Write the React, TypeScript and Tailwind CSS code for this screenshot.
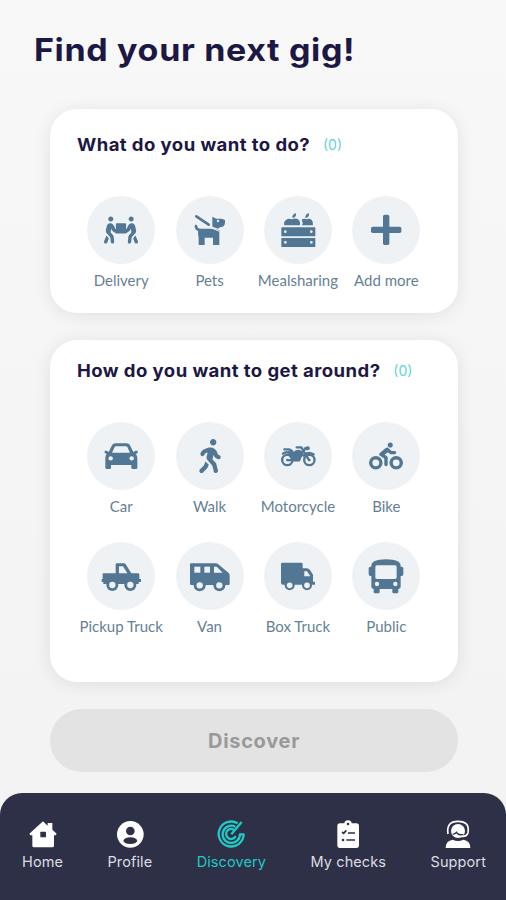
import type { ReactNode } from "react";
import { FaBiking, FaPeopleCarry, FaWalking } from "react-icons/fa";

const BG = "#eff2f4";

type Option = { label: string; icon: ReactNode };
type Tab = { label: string; icon: ReactNode; active?: boolean };

/* All option glyphs share a 204 unit canvas that spans the whole circle. */
function Glyph({ children }: { children: ReactNode }) {
  return (
    <svg viewBox="0 0 204 204" className="h-full w-full" fill="currentColor">
      {children}
    </svg>
  );
}

function Wheel({ x, y }: { x: number; y: number }) {
  return (
    <>
      <circle cx={x} cy={y} r="18" />
      <circle cx={x} cy={y} r="9.5" fill={BG} />
    </>
  );
}

const gigs: Option[] = [
  { label: "Delivery", icon: <FaPeopleCarry className="h-[28px] w-[34px]" /> },
  {
    label: "Pets",
    icon: (
      <Glyph>
        <path d="M61 61 98 86" stroke="currentColor" strokeWidth="8" strokeLinecap="round" />
        <path d="M109 62 121 68H137L147 72V81Q145 94 132 94L126 98 109 92Z" />
        <circle cx="126" cy="75" r="3.5" fill={BG} />
        <path d="M60 90Q60 101 72 102" fill="none" stroke="currentColor" strokeWidth="8" strokeLinecap="round" />
        <path d="M66 98H104L130 102V147H111V125H86V147H68V123Q66 121 66 98Z" />
        <path d="M99 92 130 106" stroke={BG} strokeWidth="3" />
      </Glyph>
    ),
  },
  {
    label: "Mealsharing",
    icon: (
      <Glyph>
        <path d="M61 88Q58 78 66 72 73 66 84 70 95 65 102 70 110 76 108 88ZM114 88Q118 79 113 71 120 66 128 70 137 66 143 72 149 79 147 88Z" />
        <path d="M85 66Q84 54 96 52 98 64 85 66ZM124 66Q123 54 135 52 137 64 124 66Z" />
        <rect x="52" y="94" width="102" height="27" rx="1" />
        <rect x="52" y="126" width="102" height="27" rx="1" />
        <g fill={BG}>
          <circle cx="64" cy="107" r="4" />
          <circle cx="142" cy="107" r="4" />
          <circle cx="64" cy="139" r="4" />
          <circle cx="142" cy="139" r="4" />
        </g>
      </Glyph>
    ),
  },
  {
    label: "Add more",
    icon: (
      <Glyph>
        <rect x="57" y="92" width="91" height="19" rx="5" />
        <rect x="93" y="56" width="19" height="91" rx="5" />
      </Glyph>
    ),
  },
];

const transport: Option[] = [
  {
    label: "Car",
    icon: (
      <Glyph>
        <path d="M65 90 75 70Q78 64 85 64H119Q126 64 129 70L139 90 146 86H152V93L146 96Q151 101 151 108V137Q151 141 147 141H137Q133 141 133 137V129H72V137Q72 141 68 141H59Q55 141 55 137V108Q55 101 59 96L53 93V86H59Z" />
        <path d="M75 92 83 75Q84 73 87 73H117Q120 73 121 75L129 92Z" fill={BG} />
        <circle cx="71" cy="109" r="6.5" fill={BG} />
        <circle cx="134" cy="109" r="6.5" fill={BG} />
      </Glyph>
    ),
  },
  { label: "Walk", icon: <FaWalking className="h-[34px] w-[22px]" /> },
  {
    label: "Motorcycle",
    icon: (
      <Glyph>
        <g fill="none" stroke="currentColor" strokeWidth="7">
          <circle cx="70" cy="114" r="15.5" />
          <circle cx="136" cy="114" r="15.5" />
          <path d="M98 76H112L134 113M61 82H76L85 88M120 84 110 102M57 95Q70 85 86 99M118 101Q130 87 149 97" strokeLinecap="round" />
        </g>
        <circle cx="70" cy="114" r="4" />
        <circle cx="136" cy="114" r="4" />
        <path d="M72 86 90 89Q94 82 106 83L115 88 116 98 108 118H86L76 105Z" />
        <path d="M119 77 130 73Q137 73 138 78 137 85 131 85H122Z" />
        <path d="M70 111H108V118H70Z" />
      </Glyph>
    ),
  },
  { label: "Bike", icon: <FaBiking className="h-[28px] w-[34px]" /> },
  {
    label: "Pickup Truck",
    icon: (
      <Glyph>
        <path d="M47 94H86V67Q86 64 89 64H111Q114 64 116 67L133 94H153Q157 94 157 98V111H162V120H155V126H49V120H44V111H47Z" />
        <path d="M96 73H108L121 94H96Z" fill={BG} />
        <Wheel x={76} y={129} />
        <Wheel x={130} y={129} />
      </Glyph>
    ),
  },
  {
    label: "Van",
    icon: (
      <Glyph>
        <path d="M42 67Q42 64 45 64H120Q124 64 127 67L158 93Q161 96 161 101V125Q161 129 157 129H46Q42 129 42 125Z" />
        <g fill={BG}>
          <rect x="55" y="74" width="18" height="18" />
          <rect x="85" y="74" width="17" height="18" />
          <path d="M114 74H122L140 92H114Z" />
        </g>
        <Wheel x={71} y={130} />
        <Wheel x={130} y={130} />
      </Glyph>
    ),
  },
  {
    label: "Box Truck",
    icon: (
      <Glyph>
        <path d="M51 66Q51 62 55 62H112Q116 62 116 66V79H128Q134 79 138 84L147 98V119H153V128H57Q51 128 51 122Z" />
        <path d="M121 88H129L139 103H121Z" fill={BG} />
        <circle cx="77" cy="130" r="15" />
        <circle cx="77" cy="130" r="8.5" fill={BG} />
        <circle cx="129" cy="130" r="15" />
        <circle cx="129" cy="130" r="8.5" fill={BG} />
      </Glyph>
    ),
  },
  {
    label: "Public",
    icon: (
      <Glyph>
        <path d="M58 72Q58 52 102 52 146 52 146 72V74H149Q154 74 154 79V97Q154 102 149 102H146V135Q146 140 139 141V150Q139 154 135 154H125Q121 154 121 150V141H83V150Q83 154 79 154H69Q65 154 65 150V141Q58 140 58 135V102H55Q50 102 50 97V79Q50 74 55 74H58Z" />
        <rect x="70" y="70" width="64" height="41" rx="5" fill={BG} />
        <circle cx="75" cy="126" r="6.5" fill={BG} />
        <circle cx="130" cy="126" r="6.5" fill={BG} />
      </Glyph>
    ),
  },
];

/* Tab icons are drawn on an 84 unit canvas. */
function TabIcon({ children }: { children: ReactNode }) {
  return (
    <svg viewBox="0 0 84 84" className="h-[28px] w-[28px]" fill="currentColor">
      {children}
    </svg>
  );
}

const NAV = "#2e3048";

const tabs: Tab[] = [
  {
    label: "Home",
    icon: (
      <TabIcon>
        <path d="M42 4 56 17V9H70V29L83 41 80 46H75V77Q75 82 70 82H15Q10 82 10 77V46H4L1 41Z" />
        <rect x="34" y="35" width="17" height="17" rx="2" fill={NAV} />
      </TabIcon>
    ),
  },
  {
    label: "Profile",
    icon: (
      <TabIcon>
        <circle cx="43" cy="43" r="40" />
        <circle cx="43" cy="33" r="13" fill={NAV} />
        <path d="M22 63Q25 52 43 52 61 52 64 63 60 72 43 72 26 72 22 63Z" fill={NAV} />
      </TabIcon>
    ),
  },
  {
    label: "Discovery",
    active: true,
    icon: (
      <TabIcon>
        <g fill="none" stroke="currentColor" strokeWidth="7">
          <path d="M62 10A37.5 37.5 0 1 0 80 43H69A26 26 0 1 1 55 20" strokeLinejoin="round" />
          <path d="M50 29A15 15 0 1 0 56 48" />
          <path d="M43 43 74 6" />
        </g>
      </TabIcon>
    ),
  },
  {
    label: "My checks",
    icon: (
      <TabIcon>
        <path d="M18 10H31Q32 1 42 1 52 1 53 10H67Q75 10 75 18V76Q75 84 67 84H18Q10 84 10 76V18Q10 10 18 10Z" />
        <circle cx="42" cy="12" r="4" fill={NAV} />
        <g fill="none" stroke={NAV} strokeWidth="5">
          <path d="M24 36 29 40 37 31M42 39H63M37 60H63" />
        </g>
        <circle cx="27" cy="60" r="4" fill={NAV} />
      </TabIcon>
    ),
  },
  {
    label: "Support",
    icon: (
      <TabIcon>
        <g fill="none" stroke="currentColor" strokeWidth="5">
          <path d="M12 42Q6 4 42 4 78 4 72 38 69 49 56 49H46" />
        </g>
        <circle cx="42" cy="33" r="21" />
        <path d="M26 42Q33 43 37 37 43 47 58 43" fill="none" stroke={NAV} strokeWidth="4" />
        <path d="M5 84Q5 62 26 59 42 67 58 59 79 62 79 84Z" />
      </TabIcon>
    ),
  },
];

function OptionCard({
  title,
  countClass,
  options,
  className,
}: {
  title: string;
  countClass: string;
  options: Option[];
  className: string;
}) {
  return (
    <section
      className={`rounded-[27px] bg-white px-[27px] shadow-[0_2px_18px_rgba(0,0,0,0.09)] ${className}`}
    >
      <h2 className="flex h-6 items-center whitespace-nowrap">
        <span className="origin-left scale-x-[1.06] text-[17.5px] font-bold tracking-[0.4px] text-[#1c1843]">
          {title}
        </span>
        <span className={`relative -top-px text-[14px] text-[#62d5d6] ${countClass}`}>(0)</span>
      </h2>
      <div className="mt-[39px] mr-[0.5px] grid grid-cols-4 gap-y-[20px]">
        {options.map((o) => (
          <button key={o.label} className="flex h-[99.5px] flex-col items-center">
            <span className="flex h-[68px] w-[68px] shrink-0 items-center justify-center rounded-full bg-[#eff2f4] text-[#527794]">
              {o.icon}
            </span>
            <span className="mt-[6px] font-['Lato'] text-[15px] leading-5 whitespace-nowrap text-[#657f95]">
              {o.label}
            </span>
          </button>
        ))}
      </div>
    </section>
  );
}

export default function App() {
  return (
    <div className="flex h-[900px] w-full flex-col overflow-hidden bg-linear-to-b from-[#f8f8f8] to-[#f2f2f2] font-['Inter',sans-serif]">
      <h1 className="mt-[28px] ml-[34px] h-[44px] origin-left scale-x-[1.08] self-start text-[31.5px] leading-[44px] font-bold tracking-[0.6px] whitespace-nowrap text-[#1c1843]">
        Find your next gig!
      </h1>

      <main className="mt-[37px] flex flex-col pr-[48px] pl-[50px]">
        <OptionCard
          title="What do you want to do?"
          countClass="ml-[26px]"
          options={gigs}
          className="h-[204px] pt-[24px]"
        />
        <OptionCard
          title="How do you want to get around?"
          countClass="ml-[30px]"
          options={transport}
          className="mt-[27px] h-[342px] pt-[19px]"
        />
        <button className="mt-[27px] h-[63px] rounded-full bg-[#e3e3e3] text-[20px] font-bold tracking-[0.7px] text-[#999999]">
          Discover
        </button>
      </main>

      <nav className="mt-auto flex h-[107px] items-start justify-between rounded-t-[22px] bg-[#2e3048] pt-[27px] pr-[20px] pl-[22px]">
        {tabs.map((t) => (
          <a
            key={t.label}
            className={`flex flex-col items-center whitespace-nowrap ${t.active ? "text-[#1fcac5]" : "text-white"}`}
          >
            {t.icon}
            <span
              className={`mt-[4px] text-[14.5px] leading-5 tracking-[0.1px] ${t.active ? "" : "text-[#dcdde3]"}`}
            >
              {t.label}
            </span>
          </a>
        ))}
      </nav>
    </div>
  );
}
